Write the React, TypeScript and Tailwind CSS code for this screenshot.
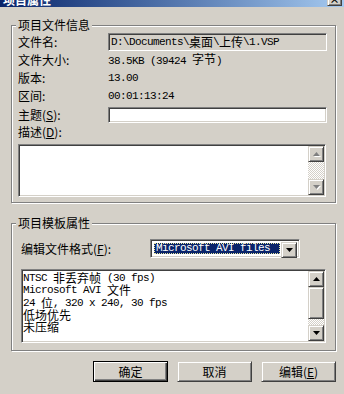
import React from 'react';

const CJK = /([\u3000-\u9fff\uff00-\uffef]+)/;

// ascii at 6px/char like SimSun, CJK full width
const Mono: React.FC<{ text: string }> = ({ text }) => (
  <>
    {text.split(CJK).map((part, i) =>
      CJK.test(part) ? (
        <span key={i} className="font-['Noto_Sans_CJK_SC',sans-serif] text-[12px] leading-[12px] tracking-normal">
          {part}
        </span>
      ) : (
        <span key={i}>{part}</span>
      )
    )}
  </>
);

const sunken =
  'border border-t-[#808080] border-l-[#808080] border-b-white border-r-white shadow-[inset_1px_1px_0_#404040,inset_-1px_-1px_0_#d4d0c8]';
const raised =
  'border border-t-[#d4d0c8] border-l-[#d4d0c8] border-b-[#404040] border-r-[#404040] shadow-[inset_1px_1px_0_#fff,inset_-1px_-1px_0_#808080] bg-[#d4d0c8]';
const checker =
  'bg-[repeating-conic-gradient(#fff_0%_25%,#d4d0c8_0%_50%)] bg-[length:2px_2px]';

const Arrow: React.FC<{ up?: boolean; disabled?: boolean }> = ({ up, disabled }) => (
  <div className={`w-[16px] h-[16px] shrink-0 flex items-center justify-center ${raised}`}>
    <svg width="7" height="4" viewBox="0 0 7 4" className={disabled ? 'drop-shadow-[1px_1px_0_#fff]' : ''}>
      <path d={up ? 'M3.5 0L7 4H0Z' : 'M0 0H7L3.5 4Z'} fill={disabled ? '#808080' : '#000'} />
    </svg>
  </div>
);

const Group: React.FC<{ title: string; className?: string; children: React.ReactNode }> = ({
  title,
  className = '',
  children,
}) => (
  <div className={`relative w-[325px] border border-[#808080] shadow-[inset_1px_1px_0_#fff,1px_1px_0_#fff] ${className}`}>
    <span className="absolute -top-[9px] left-[4px] px-[2px] bg-[#d4d0c8] text-[12px] leading-[16px]">{title}</span>
    {children}
  </div>
);

const Row: React.FC<{ label: React.ReactNode; children?: React.ReactNode }> = ({ label, children }) => (
  <div className="flex items-center h-[18px]">
    <div className="w-[90px] shrink-0 text-[12px] leading-[14px]">{label}</div>
    <div className="font-['Liberation_Mono','Noto_Sans_CJK_SC',monospace] text-[11px] leading-[12px] tracking-[-0.6px]">{children}</div>
  </div>
);

const Button: React.FC<{ primary?: boolean; children: React.ReactNode }> = ({ primary, children }) => (
  <div
    className={`w-[75px] h-[21px] flex items-center justify-center text-[12px] ${
      primary
        ? 'border border-black shadow-[inset_1px_1px_0_#fff,inset_-1px_-1px_0_#404040,inset_-2px_-2px_0_#808080]'
        : raised
    }`}
  >
    {children}
  </div>
);

const listLines = ['NTSC 非丢弃帧 (30 fps)', 'Microsoft AVI 文件', '24 位, 320 x 240, 30 fps', '低场优先', '未压缩'];

export default function App() {
  return (
    <div className="w-[344px] h-[394px] overflow-hidden bg-[#d4d0c8] text-black font-['Noto_Sans_CJK_SC',sans-serif] flex flex-col">
      {/* title bar, mostly scrolled off the top */}
      <div className="h-[18px] -mt-[11px] shrink-0 flex items-end justify-between bg-linear-to-r from-[#0a246a] to-[#a6caf0]">
        <span className="pl-[3px] text-white font-bold text-[12px] leading-[15px]">项目属性</span>
        <div className={`mr-[2px] mb-[1px] w-[15px] h-[13px] flex items-center justify-center ${raised}`}>
          <span className="text-[10px] font-bold leading-none">×</span>
        </div>
      </div>

      <div className="flex flex-col pl-[11px]">
        <Group title="项目文件信息" className="mt-[18px] pt-[7px] pl-[6px] pb-[5px]">
          <div className="flex items-center h-[18px]">
            <div className="w-[90px] shrink-0 text-[12px] leading-[14px]">文件名:</div>
            <div className={`w-[219px] h-[18px] pl-[2px] flex items-center font-['Liberation_Mono','Noto_Sans_CJK_SC',monospace] text-[11px] leading-[12px] tracking-[-0.6px] ${sunken}`}>
              <Mono text="D:\Documents\桌面\上传\1.VSP" />
            </div>
          </div>
          <Row label="文件大小:">
            <Mono text="38.5KB (39424 字节)" />
          </Row>
          <Row label="版本:">13.00</Row>
          <Row label="区间:">00:01:13:24</Row>
          <div className="flex items-center h-[19px]">
            <div className="w-[90px] shrink-0 text-[12px] leading-[14px]">
              主题(<span className="underline">S</span>):
            </div>
            <div className={`w-[219px] h-[16px] bg-white ${sunken}`} />
          </div>
          <div className="flex items-center h-[16px] text-[12px] leading-[14px]">
            描述(<span className="underline">D</span>):
          </div>
          <div className={`mt-[4px] w-[308px] h-[53px] bg-white flex justify-end ${sunken}`}>
            <div className="w-[16px] flex flex-col mr-[1px] my-[1px]">
              <Arrow up disabled />
              <div className={`flex-1 ${checker}`} />
              <Arrow disabled />
            </div>
          </div>
        </Group>

        <Group title="项目模板属性" className="mt-[20px] pt-[15px] pl-[9px] pb-[7px]">
          <div className="flex items-center h-[19px]">
            <div className="w-[129px] shrink-0 text-[12px] leading-[14px]">
              编辑文件格式(<span className="underline">F</span>):
            </div>
            <div className={`w-[150px] h-[19px] bg-white flex items-stretch p-[2px] ${sunken}`}>
              <div className="flex-1 m-[1px] bg-[#0a246a] outline-1 outline-dotted outline-[#e8e8a0] -outline-offset-1 flex items-center pl-[2px] text-white font-['Liberation_Mono',monospace] text-[11px] tracking-[-0.6px]">
                Microsoft AVI files
              </div>
              <Arrow />
            </div>
          </div>
          <div className={`mt-[11px] w-[305px] h-[74px] bg-white flex ${sunken}`}>
            <div className="flex-1 pl-[1px] pt-[2px] font-['Liberation_Mono','Noto_Sans_CJK_SC',monospace] text-[11px] tracking-[-0.6px] leading-[12px]">
              {listLines.map((l) => (
                <div key={l} className="h-[12.3px] flex items-center whitespace-pre">
                  <Mono text={l} />
                </div>
              ))}
            </div>
            <div className="w-[16px] flex flex-col mr-[1px] my-[1px]">
              <Arrow up />
              <div className={`h-[32px] shrink-0 ${raised}`} />
              <div className={`flex-1 ${checker}`} />
              <Arrow />
            </div>
          </div>
        </Group>

        <div className="mt-[10px] w-[325px] flex justify-end gap-[9px]">
          <Button primary>确定</Button>
          <Button>取消</Button>
          <Button>
            编辑(<span className="underline">E</span>)
          </Button>
        </div>
      </div>
    </div>
  );
}
